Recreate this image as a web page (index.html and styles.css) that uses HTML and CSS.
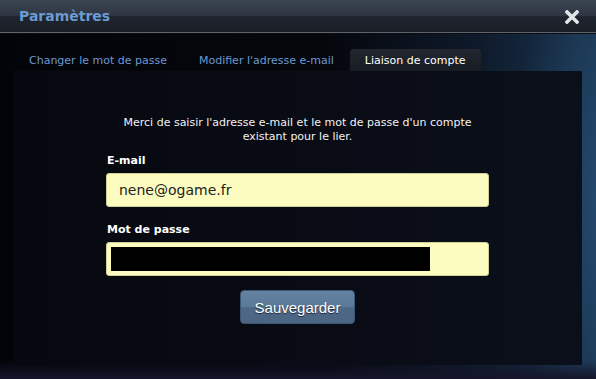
FILE: index.html
```html
<!DOCTYPE html>
<html>
<head>
<title>Paramètres</title>
<link rel="stylesheet" href="styles.css">
</head>
<body>

<div class="dialog">
	<div class="header">
		<h1 class="title">Paramètres</h1>
		<svg class="close" width="14" height="14" viewBox="0 0 14 14">
			<path d="M2 2 L12 12 M12 2 L2 12" stroke="#e2e5e8" stroke-width="3.6" stroke-linecap="square"/>
		</svg>
	</div>

	<div class="tabs">
		<a class="tab">Changer le mot de passe</a>
		<a class="tab">Modifier l'adresse e-mail</a>
		<a class="tab active">Liaison de compte</a>
	</div>

	<div class="panel">
		<p class="intro">Merci de saisir l'adresse e-mail et le mot de passe d'un compte<br>existant pour le lier.</p>

		<form class="form">
			<label class="label">E-mail</label>
			<div class="field"><span class="value">nene@ogame.fr</span></div>

			<label class="label">Mot de passe</label>
			<div class="field"><span class="hidden"></span></div>

			<div class="actions">
				<button type="button" class="save">Sauvegarder</button>
			</div>
		</form>
	</div>
</div>

</body>
</html>
```

FILE: styles.css
```css
html, body {
	margin: 0;
	padding: 0;
	width: 596px;
	height: 379px;
	overflow: hidden;
	font-family: "DejaVu Sans", Verdana, sans-serif;
	font-size: 11px;
}

body {
	background:
		radial-gradient(ellipse 90px 260px at 600px 200px, rgba(40, 80, 120, 0.7), transparent),
		linear-gradient(to right, #03040a 0%, #05070d 55%, #0e1a2a 80%, #1a3550 100%);
}

.dialog {
	position: relative;
	height: 379px;
	background: linear-gradient(to bottom, transparent 360px, #15152a 379px);
}

/* header bar */
.header {
	height: 32px;
	display: flex;
	align-items: center;
	justify-content: space-between;
	padding: 0 17px 0 19px;
	background: linear-gradient(to bottom, #3a4350 0%, #2f3743 48%, #1f252e 52%, #1a1f27 100%);
	border-bottom: 1px solid #5c636c;
	box-shadow: 0 1px 0 #0b0d11;
}

.title {
	margin: 0;
	font-size: 14px;
	font-weight: bold;
	color: #6b9bd3;
}

.close {
	display: block;
	margin-top: 1px;
}

/* tabs */
.tabs {
	display: flex;
	padding: 16px 0 0 13px;
}

.tab {
	padding: 5px 16px 0;
	height: 17px;
	color: #6b9ad2;
	cursor: pointer;
}

.tab.active {
	color: #ffffff;
	padding: 5px 15px 0;
	border-radius: 4px 4px 0 0;
	background: linear-gradient(to bottom, #232830, #171b22);
}

/* content */
.panel {
	margin: 0 14px 0 13px;
	height: 294px;
	background: linear-gradient(to right, #07080f, #0a0d17 70%, #0a101b);
	display: flex;
	flex-direction: column;
	align-items: center;
}

.intro {
	margin: 45px 0 0;
	color: #f2f2f2;
	text-align: center;
	line-height: 14px;
}

.form {
	width: 383px;
	margin-top: 10px;
	display: flex;
	flex-direction: column;
}

.label {
	color: #ffffff;
	font-weight: bold;
	padding-left: 1px;
	height: 14px;
	margin-bottom: 5px;
}

.field {
	height: 32px;
	background: #fcfcc0;
	border: 1px solid #cfcf9a;
	border-radius: 3px;
	display: flex;
	align-items: center;
	margin-bottom: 16px;
}

.value {
	padding-left: 12px;
	font-size: 14px;
	color: #222222;
}

.hidden {
	margin-left: 4px;
	width: 319px;
	height: 24px;
	background: #000000;
}

.actions {
	display: flex;
	justify-content: center;
	margin-top: -2px;
}

.save {
	width: 115px;
	height: 34px;
	border: 1px solid #3e5570;
	border-radius: 4px;
	background: linear-gradient(to bottom, #6482a2 0%, #5a7999 50%, #4d6886 52%, #4b6583 100%);
	color: #ffffff;
	font-family: "Liberation Sans", Arial, sans-serif;
	font-size: 15px;
	text-shadow: 0 1px 1px #1c2837;
	padding: 0;
}
```
